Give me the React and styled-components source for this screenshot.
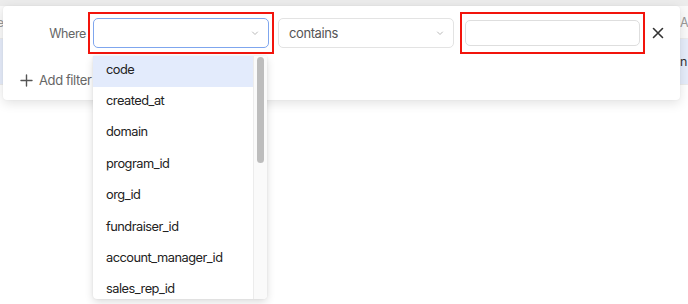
import styled, { createGlobalStyle } from "styled-components";

const GlobalStyle = createGlobalStyle`
  html, body {
    margin: 0;
    padding: 0;
    background: #ffffff;
  }
  body {
    font-family: Inter, "Noto Sans", sans-serif;
    font-size: 12.5px;
    letter-spacing: -0.4px;
    -webkit-font-smoothing: antialiased;
  }
`;

const Page = styled.div`
  position: relative;
  width: 688px;
  height: 304px;
  overflow: hidden;
  background: #ffffff;
`;

const TopBar = styled.div`
  height: 6px;
  background: #ececec;
`;

const TableRow = styled.div`
  display: flex;
  justify-content: space-between;
  align-items: center;
  height: ${({ tall }) => (tall ? "45px" : "32px")};
  background: ${({ active }) => (active ? "#e6edfb" : "#fafafa")};
  border-bottom: 1px solid #ececec;
  color: ${({ active }) => (active ? "#333" : "#999")};
`;

const EdgeCell = styled.div`
  width: ${({ w }) => w}px;
  overflow: hidden;
  white-space: nowrap;
  direction: ${({ end }) => (end ? "rtl" : "ltr")};
`;

const Popover = styled.div`
  position: absolute;
  left: 3px;
  top: 6px;
  width: 677px;
  box-sizing: border-box;
  padding: 6px 0 10px 0;
  background: #ffffff;
  border-radius: 4px;
  box-shadow: 0 3px 12px rgba(0, 0, 0, 0.12), 0 0 2px rgba(0, 0, 0, 0.06);
`;

const FilterRow = styled.div`
  display: flex;
  align-items: center;
`;

const Label = styled.span`
  width: 83px;
  text-align: right;
  color: #666;
  margin-right: 2px;
`;

const Highlight = styled.div`
  border: 2px solid #f2140c;
  padding: ${({ pv }) => pv}px 3px;
  margin-right: ${({ mr }) => mr || 0}px;
`;

const Select = styled.div`
  width: 176px;
  height: 30px;
  box-sizing: border-box;
  display: flex;
  align-items: center;
  justify-content: space-between;
  padding: 0 9px 0 10px;
  border: 1px solid ${({ focused }) => (focused ? "#7fa6ee" : "#e3e3e3")};
  border-radius: 5px;
  background: #fff;
  font-size: 13px;
  color: #555;
  margin-right: ${({ mr }) => mr || 0}px;
`;

const TextInput = styled.div`
  width: 175px;
  height: 26px;
  box-sizing: border-box;
  border: 1px solid #dedede;
  border-radius: 5px;
  background: #fff;
`;

const IconButton = styled.button`
  display: flex;
  align-items: center;
  justify-content: center;
  width: 20px;
  height: 20px;
  margin-left: 3px;
  padding: 0;
  border: none;
  background: transparent;
  color: #333;
`;

const AddFilter = styled.div`
  display: flex;
  align-items: center;
  gap: 6px;
  height: 20px;
  margin-top: 16px;
  padding-left: 17px;
  font-size: 13px;
  color: #666;
`;

const Dropdown = styled.div`
  position: absolute;
  left: 93px;
  top: 56px;
  width: 174px;
  height: 243px;
  display: flex;
  background: #fff;
  border-radius: 0 0 4px 4px;
  box-shadow: 0 3px 8px rgba(0, 0, 0, 0.14), 0 0 2px rgba(0, 0, 0, 0.08);
  overflow: hidden;
`;

const OptionList = styled.ul`
  flex: 1;
  margin: 0;
  padding: 0;
  list-style: none;
`;

const Option = styled.li`
  height: 31.4px;
  box-sizing: border-box;
  display: flex;
  align-items: center;
  padding: 0 0 5px 13px;
  font-size: 12.8px;
  letter-spacing: -0.5px;
  color: #222;
  background: ${({ active }) => (active ? "#e3ebfc" : "transparent")};
`;

const ScrollTrack = styled.div`
  width: 14px;
  padding: 1px 3px 0 3px;
  box-sizing: border-box;
  background: #fafafa;
  border-left: 1px solid #ececec;
`;

const ScrollThumb = styled.div`
  height: 106px;
  border-radius: 4px;
  background: #bdbdbd;
`;

const Chevron = () => (
  <svg width="8" height="5" viewBox="0 0 8 5" fill="none">
    <path d="M1.5 1l2.5 2.5L6.5 1" stroke="#b8b8b8" strokeWidth="1" strokeLinecap="round" strokeLinejoin="round" />
  </svg>
);

const CloseIcon = () => (
  <svg width="12" height="12" viewBox="0 0 12 12" fill="none">
    <path d="M1.5 1.5l9 9M10.5 1.5l-9 9" stroke="#333" strokeWidth="1.6" strokeLinecap="round" />
  </svg>
);

const PlusIcon = () => (
  <svg width="13" height="13" viewBox="0 0 13 13" fill="none">
    <path d="M6.5 1v11M1 6.5h11" stroke="#555" strokeWidth="1.4" strokeLinecap="round" />
  </svg>
);

const fields = [
  "code",
  "created_at",
  "domain",
  "program_id",
  "org_id",
  "fundraiser_id",
  "account_manager_id",
  "sales_rep_id",
];

export default function App() {
  return (
    <Page>
      <GlobalStyle />
      <TopBar />
      <TableRow>
        <EdgeCell w={8} end>
          Order
        </EdgeCell>
        <EdgeCell w={8}>Amount</EdgeCell>
      </TableRow>
      <TableRow tall active>
        <EdgeCell w={8} end>
          ·
        </EdgeCell>
        <EdgeCell w={8}>n</EdgeCell>
      </TableRow>

      <Popover>
        <FilterRow>
          <Label>Where</Label>
          <Highlight pv={4} mr={4}>
            <Select focused>
              <span />
              <Chevron />
            </Select>
          </Highlight>
          <Select mr={6}>
            <span>contains</span>
            <Chevron />
          </Select>
          <Highlight pv={6}>
            <TextInput />
          </Highlight>
          <IconButton>
            <CloseIcon />
          </IconButton>
        </FilterRow>
        <AddFilter>
          <PlusIcon />
          <span>Add filter</span>
        </AddFilter>
      </Popover>

      <Dropdown>
        <OptionList>
          {fields.map((f, i) => (
            <Option key={f} active={i === 0}>
              {f}
            </Option>
          ))}
        </OptionList>
        <ScrollTrack>
          <ScrollThumb />
        </ScrollTrack>
      </Dropdown>
    </Page>
  );
}
